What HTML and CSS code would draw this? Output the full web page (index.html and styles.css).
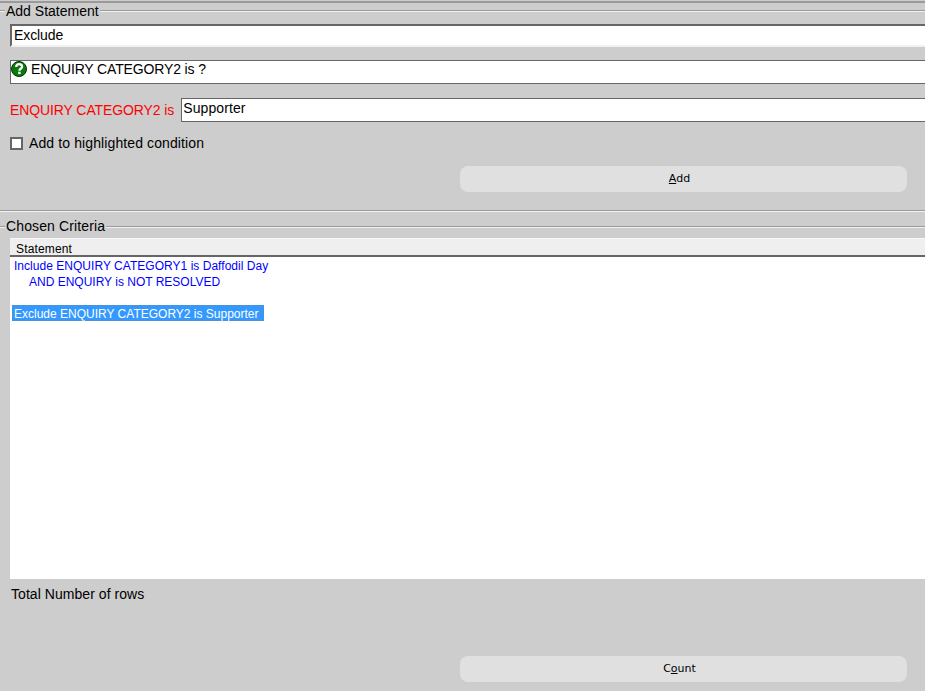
FILE: index.html
```html
<!DOCTYPE html>
<html lang="en">
<head>
<meta charset="utf-8">
<title>Add Statement</title>
<link rel="stylesheet" href="styles.css">
</head>
<body>
<div class="page">
  <section class="group group-add">
    <div class="legend"><span class="legend-stub"></span><span class="legend-text">Add Statement</span><span class="legend-line"></span></div>
    <div class="field field-sunken">Exclude</div>
    <div class="field field-prompt">
      <svg class="help-icon" viewBox="0 0 16 16" width="16" height="16" aria-hidden="true">
        <circle cx="8" cy="8" r="7.5" fill="#0a7a0a" stroke="#062c06" stroke-width="1"/>
        <path d="M5.2 6.1C5.2 4.2 6.4 3.1 8.1 3.1C9.9 3.1 11.1 4.2 11.1 5.7C11.1 7.8 8.4 7.7 8.4 9.7" fill="none" stroke="#fff" stroke-width="2.2"/>
        <rect x="7.2" y="10.7" width="2.4" height="2.4" fill="#fff"/>
      </svg>
      <span class="prompt-text">ENQUIRY CATEGORY2 is ?</span>
    </div>
    <div class="value-row">
      <span class="value-label">ENQUIRY CATEGORY2 is</span>
      <div class="field field-value">Supporter</div>
    </div>
    <label class="check-row"><span class="checkbox"></span><span class="check-text">Add to highlighted condition</span></label>
    <div class="button-row"><button class="action" type="button"><u>A</u>dd</button></div>
  </section>
  <section class="group group-criteria">
    <div class="legend"><span class="legend-stub"></span><span class="legend-text legend-text-wide">Chosen Criteria</span><span class="legend-line"></span></div>
    <div class="table">
      <div class="table-head">Statement</div>
      <div class="table-body">
        <div class="row">Include ENQUIRY CATEGORY1 is Daffodil Day</div>
        <div class="row row-sub">AND ENQUIRY is NOT RESOLVED</div>
        <div class="row"></div>
        <div class="row row-selected">Exclude ENQUIRY CATEGORY2 is Supporter</div>
      </div>
    </div>
    <div class="total">Total Number of rows</div>
    <div class="button-row"><button class="action" type="button">C<u>o</u>unt</button></div>
  </section>
</div>
</body>
</html>
```

FILE: styles.css
```css
* { box-sizing: border-box; }
html, body { margin: 0; padding: 0; }
body {
  width: 925px;
  height: 691px;
  overflow: hidden;
  background: #cdcdcd;
  color: #000;
  font-family: "Liberation Sans", Arial, sans-serif;
  font-size: 14px;
}
.page {
  height: 691px;
  padding-top: 1px;
  display: flex;
  flex-direction: column;
}
.group { border-top: 2px solid #9a9a9a; }
.group-add { height: 209px; padding-left: 10px; }
.group-criteria {
  flex: 1;
  padding-left: 10px;
  border-top: 1px solid #999;
  box-shadow: inset 0 1px 0 #f4f4f4;
}
.legend {
  margin-left: -10px;
  height: 16px;
  display: flex;
  align-items: center;
  line-height: 16px;
}
.group-criteria .legend { margin-top: 8px; }
.legend-stub, .legend-line {
  height: 2px;
  background: #999;
  border-bottom: 1px solid #f2f2f2;
}
.legend-stub { width: 5px; flex: none; }
.legend-line { flex: 1; }
.legend-text { padding: 0 1px; }
.legend-text-wide { letter-spacing: 0.13px; margin-bottom: 2px; }
.field {
  background: #fff;
  white-space: nowrap;
}
.field-sunken {
  height: 23px;
  margin-top: 5px;
  padding-left: 2px;
  line-height: 19px;
  letter-spacing: -0.1px;
  border-top: 2px solid #666;
  border-left: 2px solid #666;
  border-bottom: 2px solid #f0f0f0;
}
.field-prompt {
  height: 24px;
  margin-top: 13px;
  border: 1px solid #666;
  border-right: 0;
  display: flex;
  align-items: flex-start;
  gap: 4px;
  line-height: 17px;
}
.prompt-text { letter-spacing: -0.14px; }
.help-icon { flex: none; }
.value-row {
  margin-top: 14px;
  height: 24px;
  display: flex;
  align-items: center;
  gap: 7px;
}
.value-label {
  color: #f00;
  white-space: nowrap;
  letter-spacing: -0.1px;
  padding-bottom: 1px;
}
.field-value {
  flex: 1;
  height: 24px;
  padding-left: 1px;
  border: 1px solid #666;
  border-right: 0;
  line-height: 18px;
  letter-spacing: 0.1px;
}
.check-row {
  margin-top: 13px;
  height: 16px;
  display: flex;
  align-items: center;
  gap: 6px;
  line-height: 16px;
}
.check-text { letter-spacing: 0.11px; }
.checkbox {
  width: 13px;
  height: 13px;
  flex: none;
  background: #fff;
  border: 2px solid #666;
}
.button-row {
  display: flex;
  padding-left: 450px;
}
.group-add .button-row { margin-top: 15px; }
.group-criteria .button-row { margin-top: 54px; }
.action {
  width: 447px;
  height: 26px;
  padding: 0 8px 2px 0;
  border: 0;
  border-radius: 8px;
  background: #e0e0e0;
  color: #000;
  font-family: "DejaVu Sans", sans-serif;
  font-size: 11px;
  text-align: center;
}
.table {
  height: 341px;
  margin-top: 3px;
  background: #fff;
  font-size: 12px;
}
.table-head {
  height: 19px;
  padding-left: 6px;
  line-height: 20px;
  letter-spacing: 0.15px;
  background: #efefef;
  border-top: 1px solid #f8f8f8;
  border-bottom: 2px solid #666;
}
.table-body { padding-top: 1px; padding-left: 2px; }
.row {
  height: 16px;
  line-height: 16px;
  padding-left: 2px;
  color: #0000ff;
  white-space: nowrap;
  letter-spacing: 0.03px;
}
.row-sub { padding-left: 17px; letter-spacing: 0; }
.row-selected {
  width: 252px;
  margin-top: -1px;
  line-height: 18px;
  background: #3399ff;
  color: #fff;
  letter-spacing: 0;
  outline: 1px dotted rgba(181, 118, 42, 0.35);
  outline-offset: -1px;
}
.total {
  margin-top: 7px;
  margin-left: 1px;
  height: 16px;
  line-height: 16px;
  letter-spacing: 0.05px;
}
```
